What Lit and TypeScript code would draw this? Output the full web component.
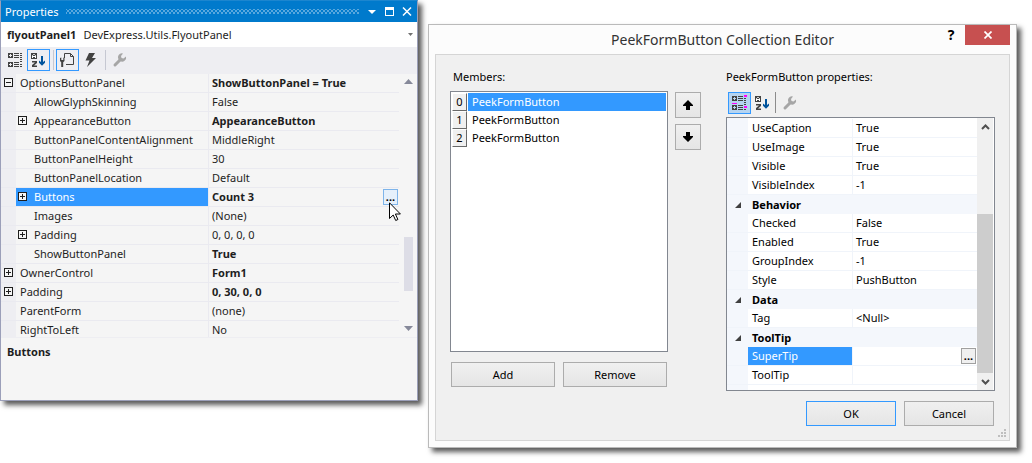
import { LitElement, html, css, svg } from "lit";
import { customElement } from "lit/decorators.js";

interface Row {
  name: string;
  value?: string;
  depth?: number;
  toggle?: "+" | "-";
  bold?: boolean;
  selected?: boolean;
  category?: boolean;
  dots?: boolean;
}

const panelRows: Row[] = [
  { name: "OptionsButtonPanel", value: "ShowButtonPanel = True", toggle: "-", bold: true },
  { name: "AllowGlyphSkinning", value: "False", depth: 1 },
  { name: "AppearanceButton", value: "AppearanceButton", depth: 1, toggle: "+", bold: true },
  { name: "ButtonPanelContentAlignment", value: "MiddleRight", depth: 1 },
  { name: "ButtonPanelHeight", value: "30", depth: 1 },
  { name: "ButtonPanelLocation", value: "Default", depth: 1 },
  { name: "Buttons", value: "Count 3", depth: 1, toggle: "+", bold: true, selected: true, dots: true },
  { name: "Images", value: "(None)", depth: 1 },
  { name: "Padding", value: "0, 0, 0, 0", depth: 1, toggle: "+" },
  { name: "ShowButtonPanel", value: "True", depth: 1, bold: true },
  { name: "OwnerControl", value: "Form1", toggle: "+", bold: true },
  { name: "Padding", value: "0, 30, 0, 0", toggle: "+", bold: true },
  { name: "ParentForm", value: "(none)" },
  { name: "RightToLeft", value: "No" },
];

const editorRows: Row[] = [
  { name: "UseCaption", value: "True" },
  { name: "UseImage", value: "True" },
  { name: "Visible", value: "True" },
  { name: "VisibleIndex", value: "-1" },
  { name: "Behavior", category: true },
  { name: "Checked", value: "False" },
  { name: "Enabled", value: "True" },
  { name: "GroupIndex", value: "-1" },
  { name: "Style", value: "PushButton" },
  { name: "Data", category: true },
  { name: "Tag", value: "<Null>" },
  { name: "ToolTip", category: true },
  { name: "SuperTip", value: "", selected: true, dots: true },
  { name: "ToolTip", value: "" },
];

const categorized = (accent: boolean) => html`<svg width="16" height="16" viewBox="0 0 16 16" shape-rendering="crispEdges">
  <path fill="#424242" fill-rule="evenodd" d="M0 1h5v5h-5zM2 2v1h-1v1h1v1h1v-1h1v-1h-1v-1zM0 10h5v5h-5zM2 11v1h-1v1h1v1h1v-1h1v-1h-1v-1z" />
  <path fill="#424242" d="M6 1h5v1h-5zM6 3h5v1h-5zM6 5h5v1h-5zM6 10h5v1h-5zM6 12h5v1h-5zM6 14h5v1h-5zM12 3h2v1h-2zM12 5h2v1h-2zM12 7h2v1h-2zM12 9h2v1h-2zM12 14h2v1h-2z" />
  ${accent
    ? svg`<path fill="#ff00ff" d="M12 0h3v2h-3zM0 8h5v1h-5zM12 11h3v2h-3z" />`
    : svg`<path fill="#424242" d="M12 1h2v1h-2zM12 12h2v1h-2z" />`}
</svg>`;

const alphabetical = html`<svg width="16" height="16" viewBox="0 0 16 16">
  <path fill="#424242" d="M0 1h6v6h-6z" shape-rendering="crispEdges" />
  <path fill="none" stroke="#fff" d="M1.500 6v-2.500l1-1h1l1 1v2.500M1.500 4.500h3" />
  <path fill="#424242" d="M1 9h5v2l-3 2.500h3v1.500h-5v-2l3-2.500h-3z" />
  <path fill="#00539c" d="M10 4h2v6l2-1.500v2.200l-3 3-3-3v-2.200l2 1.500z" />
</svg>`;

const pages = html`<svg width="16" height="16" viewBox="0 0 16 16">
  <path fill="none" stroke="#424242" d="M4.500 6v-4.500h6l3 3v8h-7.500M10.500 1.500v3h3" />
  <path fill="#424242" d="M0 6v3l1.200 1.300v4.700h2v-4.700l1.300-1.300v-3l-1.200-.5v2.500h-2v-2.500z" />
</svg>`;

const events = html`<svg width="16" height="16" viewBox="0 0 16 16">
  <path fill="#424242" d="M6 1h6l-3 5h4l-9 9 2.500-6.500h-4z" />
</svg>`;

const wrench = html`<svg width="16" height="16" viewBox="0 0 16 16">
  <path fill="none" stroke="#a6a6a6" stroke-width="3" stroke-linecap="round" d="M3 13l5-5" />
  <path fill="#a6a6a6" d="M14 4.500a4 4 0 0 1-6 4.500l-1.500-1.500a4 4 0 0 1 4.500-6l-2 2.500 .5 2 2 .5z" />
</svg>`;

const base = css`
  * {
    box-sizing: border-box;
  }
  button,
  select {
    font: inherit;
    color: inherit;
    margin: 0;
    padding: 0;
    border: 0;
    background: none;
    border-radius: 0;
  }
  svg {
    display: block;
  }
  .tool {
    display: grid;
    place-items: center;
    width: 23px;
    height: 22px;
  }
  .dots {
    position: absolute;
    right: 1px;
    top: 1px;
    width: 15px;
    height: 16px;
    border: 1px solid #a0a0a0;
    background: #f0f0f0;
    color: #000;
    line-height: 12px;
    font-weight: 700;
    text-align: center;
  }
  table {
    width: 100%;
    table-layout: fixed;
    border-collapse: separate;
    border-spacing: 0;
  }
  th,
  td {
    position: relative;
    height: 19px;
    padding: 0 0 0 3px;
    font-weight: 400;
    line-height: 18px;
    text-align: left;
    white-space: nowrap;
  }
`;

@customElement("properties-window")
export class PropertiesWindow extends LitElement {
  static styles = [
    base,
    css`
      :host {
        display: block;
        background: #f5f5f5;
        border: 1px solid #9b9fb9;
        border-top-color: #1c86cf;
        box-shadow: 4px 4px 5px rgba(0, 0, 0, 0.65);
        color: #1e1e1e;
      }
      .title {
        display: flex;
        align-items: center;
        gap: 8px;
        height: 21px;
        padding: 0 5px 0 4px;
        background: #007acc;
        color: #fff;
      }
      h2 {
        margin: 0;
        font-size: 11px;
        font-weight: 400;
      }
      .grip {
        flex: 1;
        height: 5px;
        background: radial-gradient(circle, #59a8de 30%, transparent 35%) 0 0 / 4px 4px,
          radial-gradient(circle, #59a8de 30%, transparent 35%) 2px 2px / 4px 4px;
      }
      .controls {
        display: flex;
        gap: 8px;
        padding-left: 1px;
      }
      .object {
        display: flex;
        align-items: center;
        gap: 7px;
        height: 25px;
        padding: 0 4px 0 6px;
        background: #fff;
      }
      .object label,
      .summary {
        font-weight: 700;
      }
      .object select {
        flex: 1;
        appearance: none;
      }
      .tools {
        display: flex;
        align-items: center;
        height: 27px;
        padding: 0 4px 2px 3px;
        background: #eeeef2;
      }
      .on {
        border: 1px solid #3399ff;
      }
      .sep {
        width: 1px;
        height: 20px;
        margin: 0 2px 0 3px;
        background: #c6c8d2;
      }
      .grid {
        display: flex;
        height: 264px;
        overflow: hidden;
        border-bottom: 1px solid #eeeef2;
      }
      .rows {
        flex: 1;
        min-width: 0;
      }
      .name {
        width: 208px;
        border-right: 1px solid #eaeaf0;
        border-bottom: 1px solid #eaeaf0;
        background: linear-gradient(90deg, #eeeef2 15px, transparent 15px);
      }
      .root {
        padding-left: 19px;
      }
      .child {
        padding-left: 33px;
      }
      td {
        border-bottom: 1px solid #eaeaf0;
      }
      .bold {
        font-weight: 700;
      }
      .picked {
        color: #fff;
        background: linear-gradient(90deg, #eeeef2 15px, #3399ff 15px) padding-box;
      }
      .toggle {
        position: absolute;
        top: 4px;
        left: 3px;
        width: 9px;
        height: 9px;
      }
      .child .toggle {
        left: 17px;
      }
      .dots {
        border-color: #7eb4ea;
        background: #e5f0fb;
      }
      .scroll {
        display: flex;
        flex-direction: column;
        align-items: center;
        width: 18px;
        padding: 5px 0 6px;
      }
      .thumb {
        width: 9px;
        height: 54px;
        margin: auto 0 35px;
        background: #dddde6;
      }
      .summary {
        height: 62px;
        margin: 0;
        padding: 6px;
      }
    `,
  ];

  render() {
    return html`
      <div class="title">
        <h2>Properties</h2>
        <span class="grip"></span>
        <div class="controls">
          <button aria-label="Window position"><svg width="9" height="11"><path fill="#fff" d="M0 4h8l-4 4z" /></svg></button>
          <button aria-label="Maximize">
            <svg width="9" height="11" shape-rendering="crispEdges"><path fill="#fff" fill-rule="evenodd" d="M0 1h9v9h-9zM1 4v5h7v-5z" /></svg>
          </button>
          <button aria-label="Close"><svg width="10" height="11"><path stroke="#fff" stroke-width="1.500" d="M1 1.500l8 8M9 1.500l-8 8" /></svg></button>
        </div>
      </div>
      <div class="object">
        <label for="object">flyoutPanel1</label>
        <select id="object"><option>DevExpress.Utils.FlyoutPanel</option></select>
        <svg width="5" height="3"><path fill="#717171" d="M0 0h5l-2.500 3z" /></svg>
      </div>
      <div class="tools">
        <button class="tool" aria-label="Categorized">${categorized(false)}</button>
        <button class="tool on" aria-label="Alphabetical">${alphabetical}</button>
        <span class="sep"></span>
        <button class="tool on" aria-label="Properties">${pages}</button>
        <button class="tool" aria-label="Events">${events}</button>
        <span class="sep"></span>
        <button class="tool" aria-label="Property pages">${wrench}</button>
      </div>
      <div class="grid">
        <div class="rows">
          <table>
            ${panelRows.map(
              (r) => html`<tr>
                <th scope="row" class="name ${r.depth ? "child" : "root"} ${r.selected ? "picked" : ""}">
                  ${r.toggle
                    ? html`<button class="toggle" aria-label="Expand ${r.name}">
                        <svg width="9" height="9" shape-rendering="crispEdges">
                          <path fill="#f5f5f5" stroke="#1e1e1e" d="M.5.5h8v8h-8z" />
                          <path stroke="#1e1e1e" d=${r.toggle === "+" ? "M2 4.500h5M4.500 2v5" : "M2 4.500h5"} />
                        </svg>
                      </button>`
                    : ""}${r.name}
                </th>
                <td class=${r.bold ? "bold" : ""}>${r.value}${r.dots ? html`<button class="dots" aria-label="Edit">...</button>` : ""}</td>
              </tr>`
            )}
          </table>
        </div>
        <div class="scroll">
          <svg width="9" height="5"><path fill="#868999" d="M0 5l4.500-5 4.500 5z" /></svg>
          <span class="thumb"></span>
          <svg width="9" height="5"><path fill="#868999" d="M0 0l4.500 5 4.500-5z" /></svg>
        </div>
      </div>
      <p class="summary">Buttons</p>
    `;
  }
}

@customElement("collection-editor")
export class CollectionEditor extends LitElement {
  static styles = [
    base,
    css`
      :host {
        display: block;
        background: #fcfcfc;
        border: 1px solid #bababa;
        padding: 0 6px 6px;
        box-shadow: 4px 4px 5px rgba(0, 0, 0, 0.65);
        color: #000;
      }
      .title {
        display: grid;
        grid-template-columns: 73px 1fr 28px 45px;
        height: 29px;
      }
      h2 {
        grid-column: 2;
        margin: 0;
        font-size: 14px;
        font-weight: 400;
        line-height: 29px;
        text-align: center;
        color: #333;
      }
      .help {
        height: 20px;
        font-weight: 700;
        font-size: 14px;
      }
      .close {
        display: grid;
        place-items: center;
        height: 20px;
        background: #c75050;
      }
      .body {
        border: 1px solid #d5d5d5;
        background: #f0f0f0;
        padding: 13px 1px 2px 14px;
      }
      .columns {
        display: grid;
        grid-template-columns: 225fr 26px 294fr;
        padding-right: 13px;
      }
      .caption {
        margin: 0;
        padding-left: 3px;
        line-height: 18px;
      }
      .right .caption {
        padding: 0;
      }
      .list {
        height: 261px;
        margin: 5px 0 0;
        padding: 1px;
        border: 1px solid #828790;
        background: #fff;
        list-style: none;
      }
      .list li {
        display: flex;
        height: 18px;
        line-height: 17px;
      }
      .index {
        width: 15px;
        margin-right: 1px;
        border: 1px solid;
        border-color: #fff #696969 #696969 #fff;
        background: #f0f0f0;
        text-align: center;
        line-height: 16px;
      }
      .member {
        flex: 1;
        padding-left: 4px;
      }
      .chosen {
        background: #3399ff;
        color: #fff;
      }
      .pair {
        display: grid;
        grid-template-columns: 1fr 1fr;
        gap: 8px;
        padding: 10px 1px 0;
      }
      .push {
        height: 25px;
        border: 1px solid #acacac;
        background: linear-gradient(#f0f0f0, #e5e5e5);
      }
      .default {
        border-color: #3399ff;
      }
      .order {
        display: flex;
        flex-direction: column;
        gap: 6px;
        padding-top: 24px;
      }
      .move {
        display: grid;
        place-items: center;
        height: 26px;
      }
      .left {
        padding-right: 7px;
      }
      .right {
        padding-left: 25px;
      }
      .tools {
        display: flex;
        align-items: center;
        height: 31px;
        padding: 2px 2px 0;
      }
      .on {
        border: 1px solid #3399ff;
        background: #b5d4f1;
      }
      .sep {
        width: 1px;
        height: 21px;
        margin: 0 2px 0 1px;
        background: #8c8c8c;
      }
      .grid {
        display: flex;
        height: 274px;
        border: 1px solid #828790;
        background: #fff;
        padding: 0 1px 0 0;
      }
      .rows {
        flex: 1;
        min-width: 0;
        padding-top: 1px;
        background: linear-gradient(90deg, #f4f7fc 21px, #fff 21px);
      }
      .name {
        width: 126px;
        padding-left: 25px;
        border-right: 1px solid #f0f4fa;
        border-bottom: 1px solid #f0f4fa;
      }
      td {
        border-bottom: 1px solid #f0f4fa;
      }
      .category {
        padding-left: 25px;
        background: #f4f7fc;
        font-weight: 700;
      }
      .picked {
        color: #fff;
        background: linear-gradient(90deg, #f4f7fc 21px, #3399ff 21px) padding-box;
      }
      .fold {
        position: absolute;
        left: 8px;
        top: 7px;
      }
      .scroll {
        display: flex;
        flex-direction: column;
        align-items: center;
        width: 16px;
        padding: 6px 0 5px;
        background: #f0f0f0;
      }
      .thumb {
        width: 16px;
        height: 159px;
        margin: auto 0 6px;
        background: #cdcdcd;
      }
      .answer {
        display: flex;
        justify-content: flex-end;
        gap: 8px;
        padding: 10px 14px 0 0;
      }
      .answer .push {
        width: 90px;
      }
      .resize {
        margin: 3px 0 0 auto;
      }
    `,
  ];

  render() {
    const chevron = (d: string) => html`<svg width="9" height="6"><path fill="none" stroke="#505050" stroke-width="2" d=${d} /></svg>`;
    return html`
      <div class="title">
        <h2>PeekFormButton Collection Editor</h2>
        <button class="help" aria-label="Help">?</button>
        <button class="close" aria-label="Close"><svg width="8" height="8"><path stroke="#fff" stroke-width="1.700" d="M.5.5l7 7M7.500.5l-7 7" /></svg></button>
      </div>
      <div class="body">
        <div class="columns">
          <div class="left">
            <p class="caption" id="members">Members:</p>
            <ul class="list" role="listbox" aria-labelledby="members">
              ${[0, 1, 2].map(
                (i) => html`<li role="option" aria-selected=${i === 0}>
                  <span class="index">${i}</span><span class="member ${i === 0 ? "chosen" : ""}">PeekFormButton</span>
                </li>`
              )}
            </ul>
            <div class="pair">
              <button class="push">Add</button>
              <button class="push">Remove</button>
            </div>
          </div>
          <div class="order">
            <button class="push move" aria-label="Move up"><svg width="10" height="10"><path d="M5 0l5 5v1h-3v4h-4v-4h-3v-1z" /></svg></button>
            <button class="push move" aria-label="Move down"><svg width="10" height="10"><path d="M5 10l5-5v-1h-3v-4h-4v4h-3v1z" /></svg></button>
          </div>
          <div class="right">
            <p class="caption">PeekFormButton properties:</p>
            <div class="tools">
              <button class="tool on" aria-label="Categorized">${categorized(true)}</button>
              <button class="tool" aria-label="Alphabetical">${alphabetical}</button>
              <span class="sep"></span>
              <button class="tool" aria-label="Property pages">${wrench}</button>
            </div>
            <div class="grid">
              <div class="rows">
                <table>
                  ${editorRows.map((r) =>
                    r.category
                      ? html`<tr>
                          <th class="category" colspan="2">
                            <svg class="fold" width="6" height="6"><path fill="#404040" d="M6 0v6h-6z" /></svg>${r.name}
                          </th>
                        </tr>`
                      : html`<tr>
                          <th scope="row" class="name ${r.selected ? "picked" : ""}">${r.name}</th>
                          <td>${r.value}${r.dots ? html`<button class="dots" aria-label="Edit">...</button>` : ""}</td>
                        </tr>`
                  )}
                </table>
              </div>
              <div class="scroll">
                ${chevron("M1 5l3.500-3.500 3.500 3.500")}
                <span class="thumb"></span>
                ${chevron("M1 1l3.500 3.500 3.500-3.500")}
              </div>
            </div>
          </div>
        </div>
        <div class="answer">
          <button class="push default">OK</button>
          <button class="push">Cancel</button>
        </div>
        <svg class="resize" width="10" height="9" shape-rendering="crispEdges">
          <path fill="#bfbfbf" d="M6 0h2v2h-2zM3 3h2v2h-2zM6 3h2v2h-2zM0 6h2v2h-2zM3 6h2v2h-2zM6 6h2v2h-2z" />
        </svg>
      </div>
    `;
  }
}

@customElement("app-root")
export class AppRoot extends LitElement {
  static styles = css`
    :host {
      display: grid;
      grid-template-columns: 418fr 589fr;
      align-items: start;
      gap: 10px;
      min-height: 100vh;
      box-sizing: border-box;
      padding-right: 15px;
      background: #fff;
      font: 11px/16px "Noto Sans", "Open Sans", sans-serif;
    }
    collection-editor {
      margin-top: 24px;
    }
    .pointer {
      position: absolute;
      left: 389px;
      top: 202px;
    }
  `;

  render() {
    return html`
      <properties-window></properties-window>
      <collection-editor></collection-editor>
      <svg class="pointer" width="13" height="20" aria-hidden="true">
        <path fill="#fff" stroke="#000" d="M.5.8v15.700l3.700-3.500 2.500 5.500 2.200-1-2.500-5.500h5z" />
      </svg>
    `;
  }
}
